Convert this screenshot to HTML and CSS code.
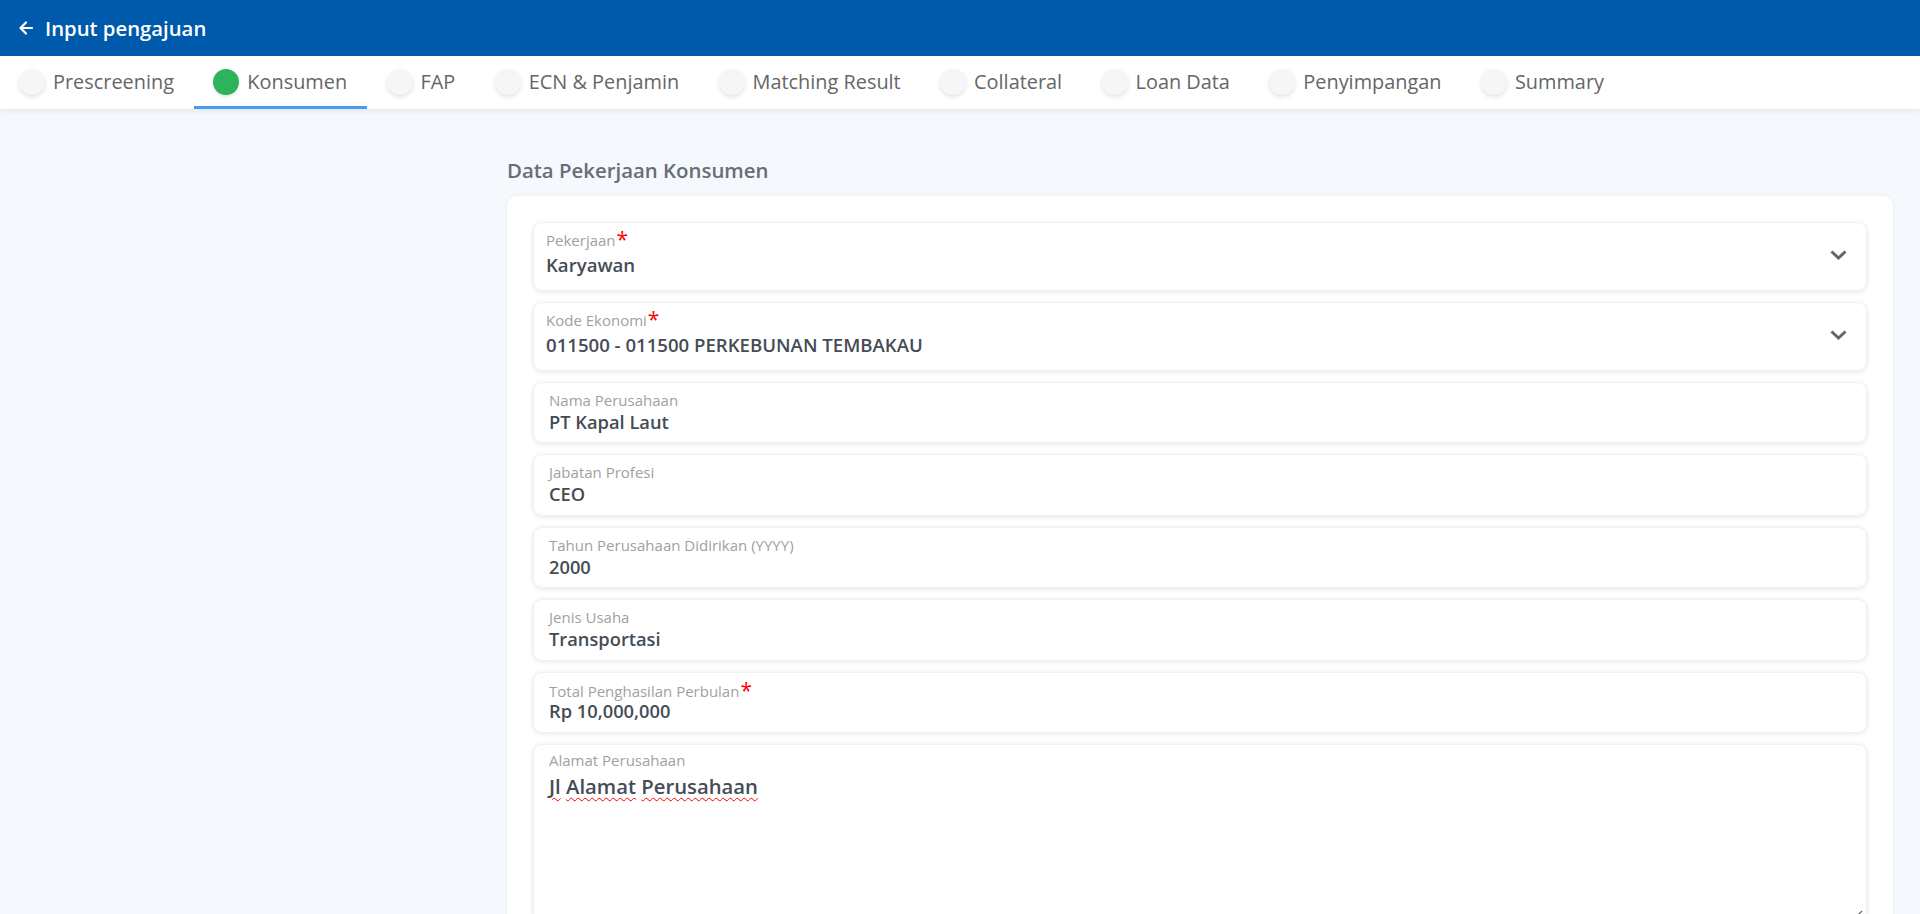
FILE: index.html
```html
<!DOCTYPE html>
<html lang="id">
<head>
<meta charset="utf-8">
<title>Input pengajuan</title>
<link rel="stylesheet" href="styles.css">
</head>
<body>
<header class="topbar">
  <svg class="back" width="14" height="14" viewBox="0 0 14 14"><path d="M13 7H2M7 1.5L1.5 7L7 12.5" fill="none" stroke="#fff" stroke-width="2.2" stroke-linecap="round" stroke-linejoin="round"/></svg>
  <span class="title">Input pengajuan</span>
</header>
<nav class="tabs">
  <div class="tab"><span class="dot"></span><span>Prescreening</span></div>
  <div class="tab active"><span class="dot"></span><span>Konsumen</span></div>
  <div class="tab"><span class="dot"></span><span>FAP</span></div>
  <div class="tab"><span class="dot"></span><span>ECN &amp; Penjamin</span></div>
  <div class="tab"><span class="dot"></span><span>Matching Result</span></div>
  <div class="tab"><span class="dot"></span><span>Collateral</span></div>
  <div class="tab"><span class="dot"></span><span>Loan Data</span></div>
  <div class="tab"><span class="dot"></span><span>Penyimpangan</span></div>
  <div class="tab"><span class="dot"></span><span>Summary</span></div>
</nav>
<main class="layout">
  <aside class="side"></aside>
  <section class="content">
    <h2 class="section-title">Data Pekerjaan Konsumen</h2>
    <div class="card">
      <div class="field select">
        <div class="fbody">
          <div class="label">Pekerjaan<span class="req">*</span></div>
          <div class="value">Karyawan</div>
        </div>
        <svg class="chev" width="17" height="10" viewBox="0 0 17 10"><path d="M1.5 1.5L8.5 8L15.5 1.5" fill="none" stroke="#666" stroke-width="3"/></svg>
      </div>
      <div class="field select">
        <div class="fbody">
          <div class="label">Kode Ekonomi<span class="req">*</span></div>
          <div class="value">011500 - 011500 PERKEBUNAN TEMBAKAU</div>
        </div>
        <svg class="chev" width="17" height="10" viewBox="0 0 17 10"><path d="M1.5 1.5L8.5 8L15.5 1.5" fill="none" stroke="#666" stroke-width="3"/></svg>
      </div>
      <div class="field">
        <div class="label">Nama Perusahaan</div>
        <div class="value">PT Kapal Laut</div>
      </div>
      <div class="field">
        <div class="label">Jabatan Profesi</div>
        <div class="value">CEO</div>
      </div>
      <div class="field">
        <div class="label">Tahun Perusahaan Didirikan (YYYY)</div>
        <div class="value">2000</div>
      </div>
      <div class="field">
        <div class="label">Jenis Usaha</div>
        <div class="value">Transportasi</div>
      </div>
      <div class="field req-field">
        <div class="label">Total Penghasilan Perbulan<span class="req">*</span></div>
        <div class="value">Rp 10,000,000</div>
      </div>
      <div class="field area">
        <div class="label">Alamat Perusahaan</div>
        <div class="value"><span class="sp">Jl</span> <span class="sp">Alamat</span> <span class="sp">Perusahaan</span></div>
        <svg class="grip" width="11" height="11" viewBox="0 0 11 11"><path d="M10 2L2 10M10 6L6 10" stroke="#666" stroke-width="1.3"/></svg>
      </div>
    </div>
  </section>
</main>
</body>
</html>
```
FILE: styles.css
```css
* { box-sizing: border-box; }
html, body { margin: 0; padding: 0; }
body {
  font-family: "Open Sans", "Noto Sans", sans-serif;
  background: #f5f8fc;
  color: #454c55;
  height: 914px;
  overflow: hidden;
}
.topbar {
  height: 56px;
  background: #005aab;
  display: flex;
  align-items: center;
  padding: 0 0 0 19px;
  gap: 12px;
  color: #fff;
}
.topbar .title {
  font-size: 20.3px;
  font-weight: 600;
  line-height: 28px;
}
.tabs {
  height: 53px;
  background: #fff;
  display: flex;
  align-items: stretch;
  box-shadow: 0 2px 6px rgba(0, 0, 0, 0.08);
  position: relative;
  z-index: 1;
}
.tab {
  display: flex;
  align-items: center;
  gap: 8px;
  padding: 1px 19.7px 0;
  font-size: 19.9px;
  color: #666;
  border-bottom: 3px solid transparent;
}
.tab:first-child { padding-left: 19px; }
.tab.active { border-bottom-color: #4a9bf3; }
.dot {
  width: 26px;
  height: 26px;
  border-radius: 50%;
  background: #f6f6f6;
  box-shadow: 0 2px 4px rgba(0, 0, 0, 0.12);
  flex: none;
}
.tab.active .dot { background: #2bb45b; box-shadow: 0 2px 3px rgba(0, 0, 0, 0.1); }
.layout {
  display: grid;
  grid-template-columns: 480px 1fr;
}
.content {
  padding: 48px 27px 0;
}
.section-title {
  margin: 0 0 12px;
  font-size: 20.4px;
  line-height: 27px;
  font-weight: 600;
  color: #676e76;
}
.card {
  background: #fff;
  border-radius: 10px;
  padding: 26px 26px 0;
  display: flex;
  flex-direction: column;
  gap: 11px;
  box-shadow: 0 0 6px rgba(0, 0, 0, 0.04);
}
.field {
  position: relative;
  border-radius: 9px;
  background: #fff;
  border: 1px solid #f1f1f1;
  box-shadow: 0 1px 5px rgba(0, 0, 0, 0.1);
  padding: 7px 15px 9px;
  height: 61.4px;
}
.label {
  font-size: 15px;
  line-height: 20px;
  color: #a1a1a1;
}
.req {
  color: #ff0000;
  font-size: 21px;
  line-height: 14px;
  margin-left: 1px;
  vertical-align: -1px;
}
.value {
  font-size: 18.3px;
  line-height: 24px;
  font-weight: 600;
  color: #454c55;
}
.field.select {
  height: 69px;
  display: flex;
  align-items: center;
  padding: 5px 19px 12px 12px;
}
.field.select .fbody { flex: 1; }
.field.select .value { margin-top: 3px; font-size: 18.6px; }
.chev { flex: none; margin-top: 4px; }
.field.req-field .label { padding-top: 2px; line-height: 18px; }
.field.req-field .value { margin-top: -1px; }
.field.area {
  height: 180px;
  padding-top: 5px;
}
.field.area .value { font-size: 20.3px; line-height: 26px; margin-top: 3px; }
.sp {
  text-decoration: underline wavy #ff0000;
  text-decoration-thickness: 1px;
  text-underline-offset: 3px;
}
.grip {
  position: absolute;
  right: 3px;
  bottom: 3px;
}
```
